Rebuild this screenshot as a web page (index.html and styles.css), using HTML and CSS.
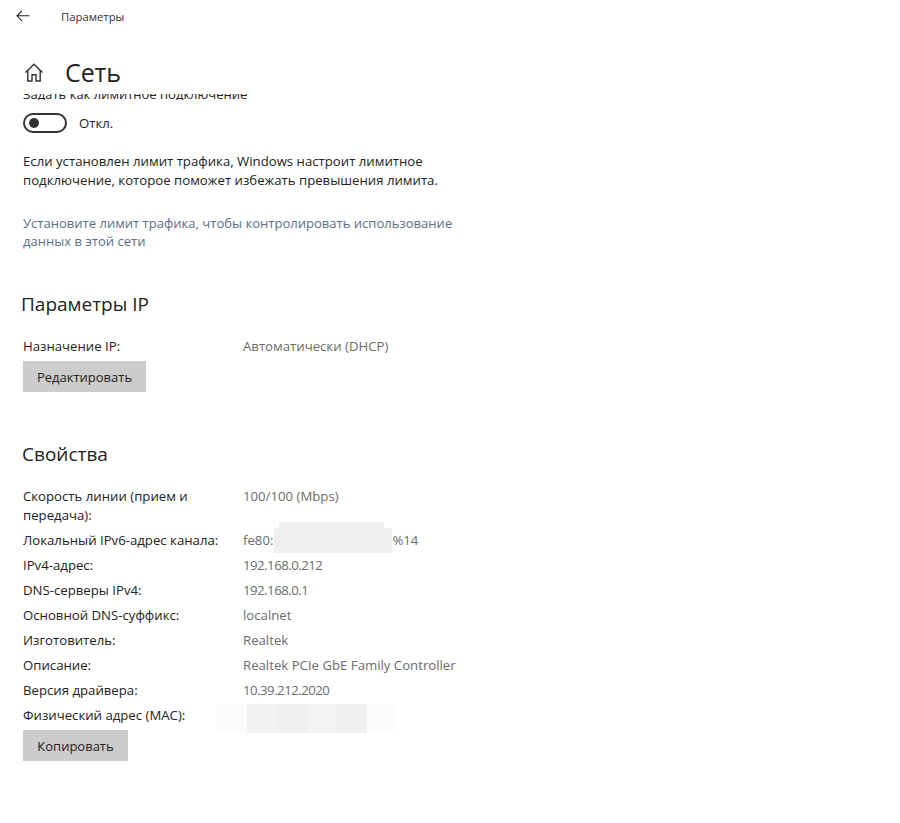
FILE: index.html
```html
<!DOCTYPE html>
<html lang="ru">
<head>
<meta charset="utf-8">
<title>Параметры</title>
<link rel="stylesheet" href="styles.css">
</head>
<body>
<div class="app">
  <header class="topbar">
    <svg class="back" width="14" height="12" viewBox="0 0 14 12"><path d="M6 .8 1 5.8l5 5M1 5.8h12.5" fill="none" stroke="#222" stroke-width="1.1"/></svg>
    <span class="app-name">Параметры</span>
  </header>
  <div class="title-row">
    <svg class="home" width="20" height="19" viewBox="0 0 20 19"><path d="M1.5 9.6 10 1.2l8.5 8.4M3.8 7.6V18h4.2v-6.3h4V18h4.2V7.6" fill="none" stroke="#333" stroke-width="1.4"/></svg>
    <h1 class="title">Сеть</h1>
  </div>
  <main class="content">
    <div class="clipped"><p class="clipped-text">Задать как лимитное подключение</p></div>
    <div class="toggle-row">
      <span class="toggle"><span class="knob"></span></span>
      <span class="toggle-label">Откл.</span>
    </div>
    <p class="note">Если установлен лимит трафика, Windows настроит лимитное подключение, которое поможет избежать превышения лимита.</p>
    <p class="link">Установите лимит трафика, чтобы контролировать использование данных в этой сети</p>

    <h2 class="heading heading-ip">Параметры IP</h2>
    <div class="props props-ip">
      <span class="k">Назначение IP:</span><span class="v">Автоматически (DHCP)</span>
    </div>
    <button class="btn btn-edit">Редактировать</button>

    <h2 class="heading heading-props">Свойства</h2>
    <div class="props">
      <span class="k k-wrap">Скорость линии (прием и передача):</span><span class="v">100/100 (Mbps)</span>
      <span class="k">Локальный IPv6-адрес канала:</span><span class="v">fe80:<span class="mask-a"></span>%14</span>
      <span class="k">IPv4-адрес:</span><span class="v num">192.168.0.212</span>
      <span class="k">DNS-серверы IPv4:</span><span class="v num">192.168.0.1</span>
      <span class="k">Основной DNS-суффикс:</span><span class="v">localnet</span>
      <span class="k">Изготовитель:</span><span class="v">Realtek</span>
      <span class="k">Описание:</span><span class="v">Realtek PCIe GbE Family Controller</span>
      <span class="k">Версия драйвера:</span><span class="v num">10.39.212.2020</span>
      <span class="k">Физический адрес (MAC):</span><span class="v"><span class="mask-b"></span></span>
    </div>
    <button class="btn btn-copy">Копировать</button>
  </main>
</div>
</body>
</html>
```
FILE: styles.css
```css
* { box-sizing: border-box; }
html, body { margin: 0; height: 100%; background: #fff; }
body {
  font-family: "Open Sans", "Noto Sans", sans-serif;
  font-size: 13.2px;
  color: #222;
  overflow: hidden;
}
.app { width: 900px; height: 823px; display: flex; flex-direction: column; }
.topbar { height: 32px; display: flex; align-items: center; padding-left: 16px; }
.back { flex: none; margin-top: -1px; }
.app-name { margin-left: 31px; font-size: 11.3px; color: #333; }
.title-row { height: 61px; display: flex; align-items: center; padding-left: 24px; }
.home { flex: none; margin-top: 19px; }
.title { margin: 19px 0 0 21px; font-size: 25px; font-weight: 400; color: #222; letter-spacing: -.1px; line-height: 32px; }
.content { flex: 1; padding: 0 23px; min-height: 0; overflow: hidden; }
.clipped { height: 6px; margin-top: 1px; overflow: hidden; }
.clipped-text { margin: -9px 0 0; font-size: 13px; line-height: 18px; white-space: nowrap; }
.toggle-row { display: flex; align-items: center; margin-top: 13px; height: 20px; }
.toggle { width: 44px; height: 20px; border: 2px solid #333; border-radius: 10px; display: flex; align-items: center; padding-left: 4px; }
.knob { width: 10px; height: 10px; border-radius: 50%; background: #333; }
.toggle-label { margin-left: 12px; }
.note { margin: 19px 0 0; width: 430px; line-height: 18.5px; }
.link { margin: 25px 0 0; width: 440px; font-size: 13.05px; line-height: 18px; color: #5d6f86; }
.heading { margin: 0; font-size: 19px; font-weight: 400; color: #222; line-height: 26px; }
.heading-ip { margin: 41px 0 0 -2px; }
.heading-props { margin: 49px 0 0 -1px; }
.props { display: grid; grid-template-columns: 220px 1fr; grid-auto-rows: 25px; line-height: 18px; }
.props .k { width: 205px; padding-top: 3px; color: #222; white-space: nowrap; }
.props .k-wrap { white-space: normal; height: 44px; line-height: 19px; }
.props .v { padding-top: 3px; color: #6c6c6c; position: relative; white-space: nowrap; }
.props .num { letter-spacing: -.5px; }
.props-ip { margin-top: 17px; }
.heading-props + .props { margin-top: 17px; grid-template-rows: 44px; }
.btn { display: block; border: 0; padding: 0; margin: 2px 0 0; height: 31px; background: #ccc; color: #222; font: inherit; font-size: 13px; }
.btn-edit { width: 123px; }
.btn-copy { width: 105px; }
.mask-a { display: inline-block; position: relative; width: 118px; height: 1px; margin-left: 1px; vertical-align: middle; }
.mask-a::before { content: ""; position: absolute; left: 0; right: 0; top: -13px; height: 25px; background: #efefef; }
.mask-a::after { content: ""; position: absolute; left: 5px; right: 8px; top: -19px; height: 8px; background: #efefef; }
.mask-b { position: absolute; left: -26px; top: 1px; width: 180px; height: 29px; background: linear-gradient(90deg, #fbfbfb 0 30px, #f2f2f2 30px 60px, #efefef 60px 90px, #f3f3f3 90px 120px, #efefef 120px 150px, #fcfcfc 150px); }
```
